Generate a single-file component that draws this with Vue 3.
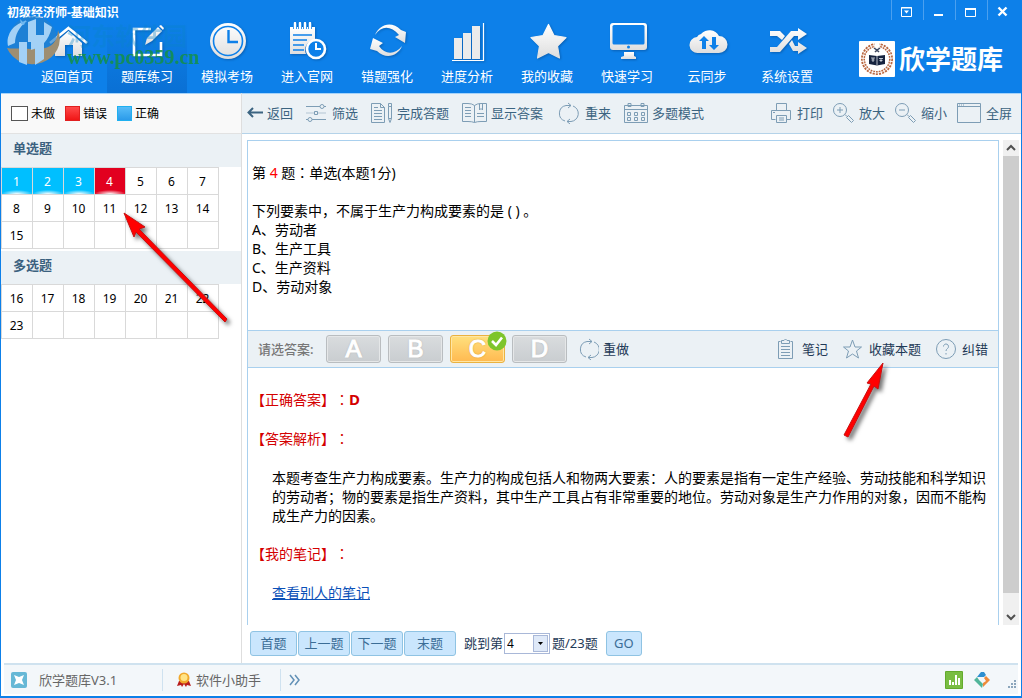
<script setup>
import { ref } from 'vue'

const W = 'url(#shine)'
const B = '#0d80e9'

const nav = [
  { label: '返回首页', icon: `<path d="M8 21 21.500 9 35 21V34H26V23H18V34H8Z" fill="${W}"/><path d="M3 21 21.500 6 40 21" fill="none" stroke="#fff" stroke-width="2.600"/>` },
  { label: '题库练习', icon: `<path d="M24 7H7V33H34V20" fill="none" stroke="#fff" stroke-width="2.600"/><path d="M18 23 20 16 31 5 35 9 25 19ZM32 4 34 3 37 6 36 8Z" fill="${W}"/>` },
  { label: '模拟考场', icon: `<circle cx="21" cy="19" r="18" fill="${W}"/><circle cx="21" cy="19" r="14.500" fill="none" stroke="${B}" stroke-width="1.600"/><path d="M21.500 8V20H31" fill="none" stroke="${B}" stroke-width="2.400"/>` },
  { label: '进入官网', icon: `<path d="M3 5H28V18A10 10 0 0 0 19 32H3Z" fill="${W}"/><path d="M8 2V7M13 2V7M18 2V7M23 2V7" stroke="${B}" stroke-width="4"/><path d="M8 1V7M13 1V7M18 1V7M23 1V7" stroke="#fff" stroke-width="2.400" stroke-linecap="round"/><path d="M6 13H25M6 18H20M6 23H17M6 28H17" stroke="${B}" stroke-width="1.600"/><circle cx="29" cy="27" r="9" fill="${B}" stroke="#fff" stroke-width="2.600"/><path d="M29 21V27H34" fill="none" stroke="#fff" stroke-width="2"/>` },
  { label: '错题强化', icon: `<path d="M8 13C12 3 24-2 34 8L39 10 38 21 28 15 32 13C24 4 15 3 8 13Z" fill="${W}"/><path d="M35 24C31 34 19 38 10 29L3 27 6 16 16 21 12 24C18 33 28 33 35 24Z" fill="${W}"/>` },
  { label: '进度分析', icon: `<path d="M7 16H15V37H7ZM16 11H24V37H16ZM25 4H33V37H25Z" fill="#ebebeb"/><path d="M5 38.500H36.500V1" fill="none" stroke="#fff" stroke-width="1.200"/>` },
  { label: '我的收藏', icon: `<path d="M21.500 2.500 27 13.500 39 15.500 30.500 24 32.500 36 21.500 30.500 10.500 36 12.500 24 4 15.500 16 13.500Z" fill="${W}" stroke="${W}" stroke-width="1.200" stroke-linejoin="round"/>` },
  { label: '快速学习', icon: `<path d="M6 1H37Q40 1 40 4V25Q40 28 37 28H6Q3 28 3 25V4Q3 1 6 1Z" fill="${W}"/><rect x="5.500" y="3" width="32" height="19.500" rx="1.500" fill="${B}"/><circle cx="21.500" cy="25" r="1.500" fill="${B}"/><path d="M17 30H27V34L29 35V37H14V35L17 34Z" fill="${W}"/>` },
  { label: '云同步', icon: `<path d="M11 31A8 8 0 0 1 10 15A6 6 0 0 1 14 12A11 11 0 0 1 32 14A8.500 8.500 0 0 1 32 31Z" fill="${W}"/><path d="M17 14 22 19H19V27H15V19H12ZM27 28 22 23H25V15H29V23H32Z" fill="${B}"/>` },
  { label: '系统设置', icon: `<path d="M3 9H13L18 14 15 18 10 14H3ZM3 30V25H10L24 9H31V6L40 12 31 18V14H27L13 30ZM22 22 25 18 28 24H31V20L40 26 31 32V29H26Z" fill="${W}"/>` },
]
const activeNav = ref(1)

const leftTools = [
  { label: '返回', w: 16, icon: '<path d="M1 10.500H16M6 6 1.500 10.500 6 15" stroke="#3b6481" stroke-width="2"/>' },
  { label: '筛选', w: 22, icon: '<path d="M0 4.500H14M18 4.500H20M0 17.500H2M6 17.500H20" /><path d="M0 11H8M12 11H20" opacity=".5"/><circle cx="16" cy="4.500" r="2"/><circle cx="4" cy="17.500" r="2"/><path d="M8.500 9.500H11.500V12.500H8.500Z"/>' },
  { label: '完成答题', w: 22, icon: '<path d="M.5 1.500H9.500L13.500 5.500V20.500H.5ZM9.500 1.500V5.500H13.500M3 5.500H7M3 8.500H11M3 11.500H11M3 14.500H11M3 17.500H11"/><path d="M17.500 4.500 17.500 16.500 19 20.500 20.500 16.500V1.500H17.500V4.500H20.500M17.500 16.500H20.500"/>' },
  { label: '显示答案', w: 25, icon: '<path d="M12.500 3.500Q10 1.500 6 1.500H.5V19.500H6Q10 19.500 12.500 20.500Q15 19.500 19 19.500H24.500V1.500H19Q15 1.500 12.500 3.500V20.500M3 5.500H9M3 8.500H9M3 11.500H9M3 14.500H9M15 11.500H22M15 14.500H22M17.500 1.500V8L19 6.500 20.500 8V1.500"/>' },
  { label: '重来', w: 25, icon: '<path d="M9 19A8 8 0 0 1 10 3.500H15M17 4A8 8 0 0 1 15 19.500H11M12 1 15 3.500 12 6M14 17 11 19.500 14 22"/>' },
  { label: '多题模式', w: 24, icon: '<path d="M.5 3.500H23.500V20.500H.5ZM.5 7.500H23.500"/><path d="M4 1.500H7V4.500H4ZM17 1.500H20V4.500H17ZM3.500 10.500H6.500V13.500H3.500ZM10.500 10.500H13.500V13.500H10.500ZM17.500 10.500H20.500V13.500H17.500ZM3.500 15.500H6.500V18.500H3.500ZM10.500 15.500H13.500V18.500H10.500ZM17.500 15.500H20.500V18.500H17.500Z"/>' },
]
const rightTools = [
  { label: '打印', w: 22, icon: '<path d="M5.500 8V1.500H15.500V8M4.500 17.500H.5V8.500H19.500V17.500H15.500M5.500 13.500H15.500V20.500H5.500ZM8 16H13M8 18H13M2 10.500H4"/>' },
  { label: '放大', w: 22, icon: '<circle cx="7" cy="8" r="6.500"/><path d="M4 8H10M7 5V11M12 12.500 14 14.500M15.500 13.500 20.500 18.500 18.500 20.500 13.500 15.500Z"/>' },
  { label: '缩小', w: 22, icon: '<circle cx="7" cy="8" r="6.500"/><path d="M4 8H10M12 12.500 14 14.500M15.500 13.500 20.500 18.500 18.500 20.500 13.500 15.500Z"/>' },
  { label: '全屏', w: 25, icon: '<path d="M.5 1.500H23.500V20.500H.5ZM.5 4.500H23.500"/><path d="M2 3H3M4 3H5M6 3H7"/>' },
]
const answerTools = [
  { label: '笔记', w: 20, icon: '<path d="M2.500 3.500H.5V20.500H14.500V3.500H12.500M3.500 2.500H6L7.500 1 9 2.500H11.500V5.500H3.500ZM3 8.500H12M3 11.500H12M3 14.500H12M3 17.500H12"/>' },
  { label: '收藏本题', w: 22, icon: '<path d="M9.500 2 12 9H18.500L13.500 13 15.500 20 9.500 16 3.500 20 5.500 13 .5 9H7Z"/>' },
  { label: '纠错', w: 22, icon: '<circle cx="10" cy="11" r="9.500"/><path d="M7.500 8.500A2.500 2.500 0 1 1 11.500 10.500Q10 11.500 10 13M10 15V16.500"/>' },
]

const sections = [
  { title: '单选题', cells: Array.from({ length: 21 }, (_, i) => (i < 15 ? i + 1 : null)) },
  { title: '多选题', cells: Array.from({ length: 14 }, (_, i) => (i < 8 ? i + 16 : null)) },
]
const states = { 1: 'right', 2: 'right', 3: 'right', 4: 'wrong' }
const choices = ['A', 'B', 'C', 'D']
const chosen = ref('C')
const jump = ref(4)
</script>

<template>
  <div class="window">
    <svg class="defs" width="0" height="0" aria-hidden="true">
      <linearGradient id="shine" x1="0" y1="0" x2="0" y2="1">
        <stop offset="0" stop-color="#fff" /><stop offset="1" stop-color="#dedede" />
      </linearGradient>
    </svg>

    <header class="header">
      <div class="titlebar">
        <h1>初级经济师-基础知识</h1>
        <div class="controls">
          <button aria-label="菜单"><svg width="12" height="12" fill="none" stroke="#fff"><path d="M.5 1.500H10.500V10.500H.5ZM0 2H11" /><path d="M3 4.500H8L5.500 7.500Z" fill="#fff" stroke="none" /></svg></button>
          <button aria-label="最小化"><svg width="12" height="12"><path d="M1 8H10V10H1Z" fill="#fff" /></svg></button>
          <button aria-label="最大化"><svg width="12" height="12" fill="none" stroke="#fff"><path d="M.5 2.500H10.500V10.500H.5Z" /><path d="M0 3H11" stroke-width="2" /></svg></button>
          <button aria-label="关闭"><svg width="12" height="12" fill="none" stroke="#fff"><path d="M1.500 1.500 9.500 9.500M9.500 1.500 1.500 9.500" stroke-width="2.400" /></svg></button>
        </div>
      </div>
      <div class="banner">
        <nav class="nav">
          <button v-for="(n, i) in nav" :key="n.label" :class="{ active: i === activeNav }" @click="activeNav = i">
            <svg width="42" height="40" viewBox="-1 0 42 40" v-html="n.icon"></svg>
            <span>{{ n.label }}</span>
          </button>
        </nav>
        <div class="brand">
          <svg width="36" height="36" viewBox="0 0 36 36">
            <rect width="36" height="36" rx="1" fill="#fff" />
            <circle cx="18" cy="18" r="14" fill="none" stroke="#b9663f" stroke-width="4" stroke-dasharray="2 1" />
            <circle cx="18" cy="18" r="14" fill="none" stroke="#fff" stroke-width=".8" />
            <path d="M15 0H21L20 6H16Z" fill="#fff" />
            <path d="M10 14 18 15 26 14V23L18 24.500 10 23Z" fill="#16233f" />
            <path d="M18 15V24M12 17H16M12.500 19H15.500M14 17V21M20 17.500H24M22 17V21M20.500 19.500H23.500" stroke="#dfe4ec" stroke-width=".8" />
            <path d="M15 7 18 9 21 7M16 11 18 9 20 11" stroke="#3b455d" stroke-width="1.500" fill="none" />
          </svg>
          <strong>欣学题库</strong>
        </div>
      </div>
      <div class="mark">
        <svg width="56" height="54" viewBox="0 0 56 54">
          <circle cx="28" cy="26" r="24" fill="#2580cc" opacity=".7" />
          <path d="M2 34A27 25 0 0 0 53 16C52 31 44 36 26 35 14 34 6 35 2 34Z" fill="#9d8e72" />
          <path d="M3 32A23 21 0 0 1 22 7C14 13 10 21 10 29ZM23 8 31 5V21H39V8L47 13C43 28 37 33 26 36V28H22V51L14 48V28H23Z" fill="#a3d1f6" />
          <path d="M30 28H39V45L30 51Z" fill="#a3d1f6" /><path d="M15 5 18 8 21 6 19 11 16 10Z" fill="#6fb7ef" />
        </svg>
        <span class="mark-name">河东软件园</span>
        <span class="mark-url">www.pc0359.cn</span>
      </div>
    </header>

    <div class="body">
      <aside class="sidebar">
        <div class="legend">
          <span class="todo"><i></i>未做</span><span class="bad"><i></i>错误</span><span class="good"><i></i>正确</span>
        </div>
        <section v-for="s in sections" :key="s.title">
          <h2>{{ s.title }}</h2>
          <div class="cells">
            <template v-for="(c, i) in s.cells" :key="i">
              <button v-if="c" :class="states[c]" @click="jump = c">{{ c }}</button>
              <span v-else></span>
            </template>
          </div>
        </section>
      </aside>

      <main class="main">
        <div class="toolbar">
          <div class="tools">
            <button v-for="t in leftTools" :key="t.label"><svg class="line" :width="t.w" height="22" v-html="t.icon"></svg>{{ t.label }}</button>
          </div>
          <div class="tools right">
            <button v-for="t in rightTools" :key="t.label"><svg class="line" :width="t.w" height="22" v-html="t.icon"></svg>{{ t.label }}</button>
          </div>
        </div>

        <div class="viewer">
          <article class="paper">
            <div class="question">
              <p class="lead">第 <em>4</em> 题<span class="mid">：</span>单选(本题1分)</p>
              <p class="stem">下列要素中，不属于生产力构成要素的是 (  ) 。</p>
              <p>A、劳动者</p>
              <p>B、生产工具</p>
              <p>C、生产资料</p>
              <p>D、劳动对象</p>
            </div>
            <div class="answerbar">
              <span class="prompt">请选答案:</span>
              <div class="choices">
                <button v-for="c in choices" :key="c" :class="{ chosen: c === chosen }" @click="chosen = c">
                  {{ c }}
                  <svg v-if="c === chosen" class="tick" width="20" height="20"><circle cx="10" cy="10" r="9.500" fill="#7ec52c" /><path d="M5 10 9 14 15 6.500" fill="none" stroke="#fff" stroke-width="2.600" /></svg>
                </button>
              </div>
              <button class="flat"><svg class="line" width="22" height="22" v-html="leftTools[4].icon"></svg>重做</button>
              <div class="answertools">
                <button v-for="t in answerTools" :key="t.label" class="flat"><svg class="line" :width="t.w" height="22" v-html="t.icon"></svg>{{ t.label }}</button>
              </div>
            </div>
            <div class="analysis">
              <h3>【正确答案】<span class="mid">：</span><b>D</b></h3>
              <h3>【答案解析】<span class="mid">：</span></h3>
              <p>本题考查生产力构成要素。生产力的构成包括人和物两大要素：人的要素是指有一定生产经验、劳动技能和科学知识的劳动者；物的要素是指生产资料，其中生产工具占有非常重要的地位。劳动对象是生产力作用的对象，因而不能构成生产力的因素。</p>
              <h3>【我的笔记】<span class="mid">：</span></h3>
              <p><a href="#">查看别人的笔记</a></p>
            </div>
          </article>
          <div class="scrollbar">
            <button aria-label="向上滚动"><svg width="16" height="16"><path d="M4 10 8 6 12 10" /></svg></button>
            <div class="thumb"></div>
            <button aria-label="向下滚动"><svg width="16" height="16"><path d="M4 6 8 10 12 6" /></svg></button>
          </div>
        </div>

        <div class="pager">
          <button class="short">首题</button><button>上一题</button><button>下一题</button><button>末题</button>
          <label for="jump">跳到第</label>
          <div class="pick">
            <select id="jump" v-model="jump"><option v-for="n in 23" :key="n" :value="n">{{ n }}</option></select>
            <span><svg width="5" height="3"><path d="M0 0H5L2.500 3Z" /></svg></span>
          </div>
          <span class="total">题/23题</span>
          <button class="go">GO</button>
        </div>
      </main>
    </div>

    <footer class="footer">
      <div class="cell version">
        <svg width="16" height="16"><rect width="16" height="16" rx="2" fill="#66b8d6" /><path d="M3 3 8 5 13 3 11 8 13 13 8 11 3 13 5 8Z" fill="#fff" /></svg>欣学题库V3.1
      </div>
      <div class="cell helper">
        <svg width="16" height="16"><path d="M3 9 1 14 5 13 6 15 8 12 10 15 11 13 15 14 13 9Z" fill="#b81c1c" /><circle cx="8" cy="6" r="5.500" fill="#f1a92c" /><circle cx="8" cy="5.500" r="3.500" fill="#ffe487" /></svg>软件小助手
      </div>
      <button class="more" aria-label="更多"><svg width="12" height="12" fill="none" stroke="#6291b7" stroke-width="1.500"><path d="M1 1 5 6 1 11M6 1 10 6 6 11" /></svg></button>
      <div class="status">
        <svg width="18" height="18"><rect width="18" height="18" rx="1" fill="#63aa2d" /><rect x="1" y="1" width="16" height="16" fill="#79bd42" /><path d="M4 9H6V14H4ZM7 11H9V14H7ZM10 4H12V14H10ZM13 7H15V14H13Z" fill="#fff" /></svg>
        <svg width="16" height="16"><path d="M3 5 7 0H10L12 3 10 5Z" fill="#2e8fd0" /><path d="M0 8 3 5 5 8 9 12 8 16Z" fill="#51b59a" /><path d="M12 4 16 8 9 15V11L12 9 10 6Z" fill="#ef8a3a" /></svg>
        <svg class="grip" width="9" height="9" fill="#8ca6bc"><path d="M0 6H2V8H0ZM3 6H5V8H3ZM6 6H8V8H6ZM3 3H5V5H3ZM6 3H8V5H6ZM6 0H8V2H6Z" /></svg>
      </div>
    </footer>

    <svg class="pointer first" width="112" height="116" viewBox="0 0 112 116">
      <path d="M4 3 25 17 19 19 107 109 105 112 16 22 14 27Z" />
    </svg>
    <svg class="pointer second" width="48" height="82" viewBox="0 0 48 82">
      <path d="M41 3 36 29 32 26 6 77 2 75 29 24 25 23Z" />
    </svg>
  </div>
</template>

<style>
body { margin: 0; }
</style>

<style scoped>
* { box-sizing: border-box; }
.window {
  position: relative; display: flex; flex-direction: column; min-height: 100vh;
  border: 1px solid #0d80e9; border-top: 0; border-bottom-width: 2px; background: #fff;
  font-family: "Noto Sans", "Noto Sans CJK SC", sans-serif; font-size: 13px; line-height: 20px; color: #000;
  text-spacing-trim: space-all;
}
.defs { position: absolute; }
h1, h2, h3, p { margin: 0; font-weight: normal; }
button { padding: 0; border: 0; background: none; font: inherit; color: inherit; cursor: pointer; }
svg { flex: none; }
.line { fill: none; stroke: #7d9db5; stroke-width: 1; }
.mid { font-family: "Noto Sans CJK TC", sans-serif; }

.header { position: relative; height: 93px; background: #0d80e9; color: #fff; }
.titlebar { display: flex; justify-content: space-between; height: 22px; padding: 0 2px 0 6px; }
.titlebar h1 { font-size: 12px; line-height: 18px; padding-top: 4px; font-weight: bold; }
.controls { display: flex; }
.controls button { display: flex; width: 32px; height: 20px; padding: 6px 0 0 9px; border-left: 1px solid #4ba0ef; }
.banner { display: flex; justify-content: space-between; padding: 0 18px 0 26px; }
.nav { display: flex; position: relative; z-index: 1; }
.nav button { display: flex; flex-direction: column; align-items: center; gap: 4px; width: 80px; height: 71px; }
.nav button svg { filter: drop-shadow(1px 1px 1px #0960b5); }
.nav .active { background: linear-gradient(#0d80e9, #0a70d4); }
.brand { display: flex; gap: 4px; padding-top: 19px; }
.brand strong { font-size: 26px; line-height: 36px; }
.mark { position: absolute; left: 4px; top: 14px; z-index: 1; pointer-events: none; }
.mark span { position: absolute; left: 62px; white-space: nowrap; font-weight: bold; }
.mark-name { top: 10px; font-size: 24px; line-height: 24px; color: #0a84c8; opacity: .35; }
.mark-url { top: 31px; font: bold 20px/24px "Liberation Serif", serif; color: #149047; opacity: .85; }

.body { display: flex; flex: 1; }
.sidebar { width: 241px; border-right: 1px solid #dedede; }
.legend { display: flex; gap: 10px; height: 41px; padding: 0 10px; align-items: center; background: #f9f9f9; border-top: 1px solid #a5d3fa; border-bottom: 1px solid #e2e2e2; font-size: 12px; }
.legend span { display: flex; align-items: center; gap: 3px; }
.legend i { width: 15px; height: 15px; }
.legend .todo i { width: 17px; border: 1px solid #555; background: #fff; }
.legend .bad i { border: 1px solid #e12020; background: linear-gradient(#ff4b4b, #f01616); }
.legend .good i { border: 1px solid #1fb0f0; background: linear-gradient(#58bdf8, #2b9bea); }
.sidebar section { margin-bottom: 2px; }
.sidebar h2 { height: 33px; padding-left: 12px; background: #ebf1f5; color: #3b617f; font-size: 13px; line-height: 28px; font-weight: bold; }
.cells { display: grid; grid-template-columns: repeat(7, 31px); width: 218px; border: 1px solid #d9d9d9; border-width: 1px 0 0 1px; }
.cells > * { height: 27px; padding: 1px 1px 0 0; border: 1px solid #d9d9d9; border-width: 0 1px 1px 0; text-align: center; font-size: 12px; }
.cells .right { background: radial-gradient(ellipse 16px 4px at 50% 100%, #fff, #00bfff); color: #fff; }
.cells .wrong { background: radial-gradient(ellipse 16px 4px at 50% 100%, #fff, #e2001f); color: #fff; }

.main { display: flex; flex-direction: column; flex: 1; min-width: 0; }
.toolbar { display: flex; justify-content: space-between; height: 41px; padding: 0 9px 2px 5px; background: #ebf1f5; border-top: 1px solid #a5d3fa; border-bottom: 1px solid #b5d3e9; color: #3b6481; }
.tools { display: flex; gap: 13px; align-items: center; }
.tools.right { gap: 10px; }
.tools button { display: flex; align-items: center; gap: 4px; white-space: nowrap; }
.viewer { display: flex; flex: 1; gap: 4px; padding: 6px 2px 0 5px; }
.paper { display: flex; flex-direction: column; flex: 1; border: 1px solid #a9d0ee; border-bottom: 0; font-size: 14px; line-height: 19px; }
.question { height: 189px; padding: 22px 4px; }
.question .lead { margin-bottom: 19px; }
.stem { white-space: pre-wrap; }
.question em { font-style: normal; color: #f00; }
.answerbar { display: flex; align-items: center; height: 38px; padding: 0 10px; background: #ebf1f5; border: 1px solid #a9d0ee; border-width: 1px 0; font-size: 13px; }
.prompt { width: 68px; color: #777; font-weight: 500; }
.choices { display: flex; gap: 7px; margin-right: 10px; }
.choices button { position: relative; width: 55px; height: 28px; border: 1px solid #b9bdc0; border-radius: 3px; background: linear-gradient(#d9dcde, #c9cdd0); box-shadow: inset 0 0 0 1px #e5e7e8; color: #fff; font: 24px/26px "Liberation Sans", sans-serif; text-shadow: 0 0 2px #999; -webkit-text-stroke: 1px #fff; }
.choices .chosen { border-color: #eab240; background: linear-gradient(#ffe07e, #ffb950); box-shadow: inset 0 0 0 1px #ffe6a5; text-shadow: 0 0 2px #b87800; }
.tick { position: absolute; right: -3px; top: -5px; }
.flat { display: flex; align-items: center; gap: 4px; color: #1f3a57; }
.answertools { display: flex; gap: 15px; margin-left: auto; }
.analysis { flex: 1; padding: 22px 8px 0 24px; }
.analysis h3 { height: 19px; margin: 0 0 20px -21px; font-size: 14px; color: #d40000; }
.analysis h3 b { font-size: 15px; }
.analysis p { margin-bottom: 19px; }
.analysis a { color: #0a50b8; }
.scrollbar { display: flex; flex-direction: column; width: 16px; background: #f0f0f0; }
.scrollbar button { display: flex; height: 16px; }
.scrollbar path { fill: none; stroke: #505050; stroke-width: 2; }
.thumb { flex: 1; margin-bottom: 16px; background: #cdcdcd; }

.pager { display: flex; align-items: center; gap: 1px; height: 38px; padding: 0 0 2px 8px; color: #1f3a57; }
.pager button { width: 52px; height: 25px; border: 1px solid #8fc3e3; border-radius: 3px; background: #cae6fd; color: #3b6d96; line-height: 22px; }
.pager .short { width: 47px; }
.pager label { margin-left: 7px; }
.pick { position: relative; width: 46px; }
.pick select { display: block; width: 46px; height: 21px; padding: 0 2px; appearance: none; border: 1px solid #a9b8d8; border-radius: 0; background: #fff; font: inherit; font-size: 12px; }
.pick span { position: absolute; right: 2px; top: 2px; display: flex; align-items: center; justify-content: center; width: 15px; height: 17px; border: 1px solid #a9b8d8; background: #dfe9f8; pointer-events: none; }
.total { margin: 0 7px 0 1px; }
.pager .go { width: 36px; }

.footer { display: flex; align-items: center; height: 31px; margin: 0 3px 2px; border-top: 2px solid #cfe2ef; background: #f3f7fa; color: #666; }
.cell { display: flex; align-items: center; height: 22px; border-right: 1px solid #cfe2f0; }
.version { gap: 12px; width: 159px; padding-left: 7px; }
.helper { gap: 4px; width: 118px; padding-left: 13px; }
.more { display: flex; margin-left: 8px; }
.status { display: flex; align-items: center; gap: 11px; margin-left: auto; padding-right: 1px; }
.grip { align-self: flex-end; margin-left: 7px; }

.pointer { position: absolute; pointer-events: none; fill: #f00; stroke: #c81010; stroke-width: 1; overflow: visible; filter: drop-shadow(3px 3px 2px rgba(0, 0, 0, .55)); }
.first { left: 119px; top: 210px; }
.second { left: 841px; top: 360px; }
</style>
